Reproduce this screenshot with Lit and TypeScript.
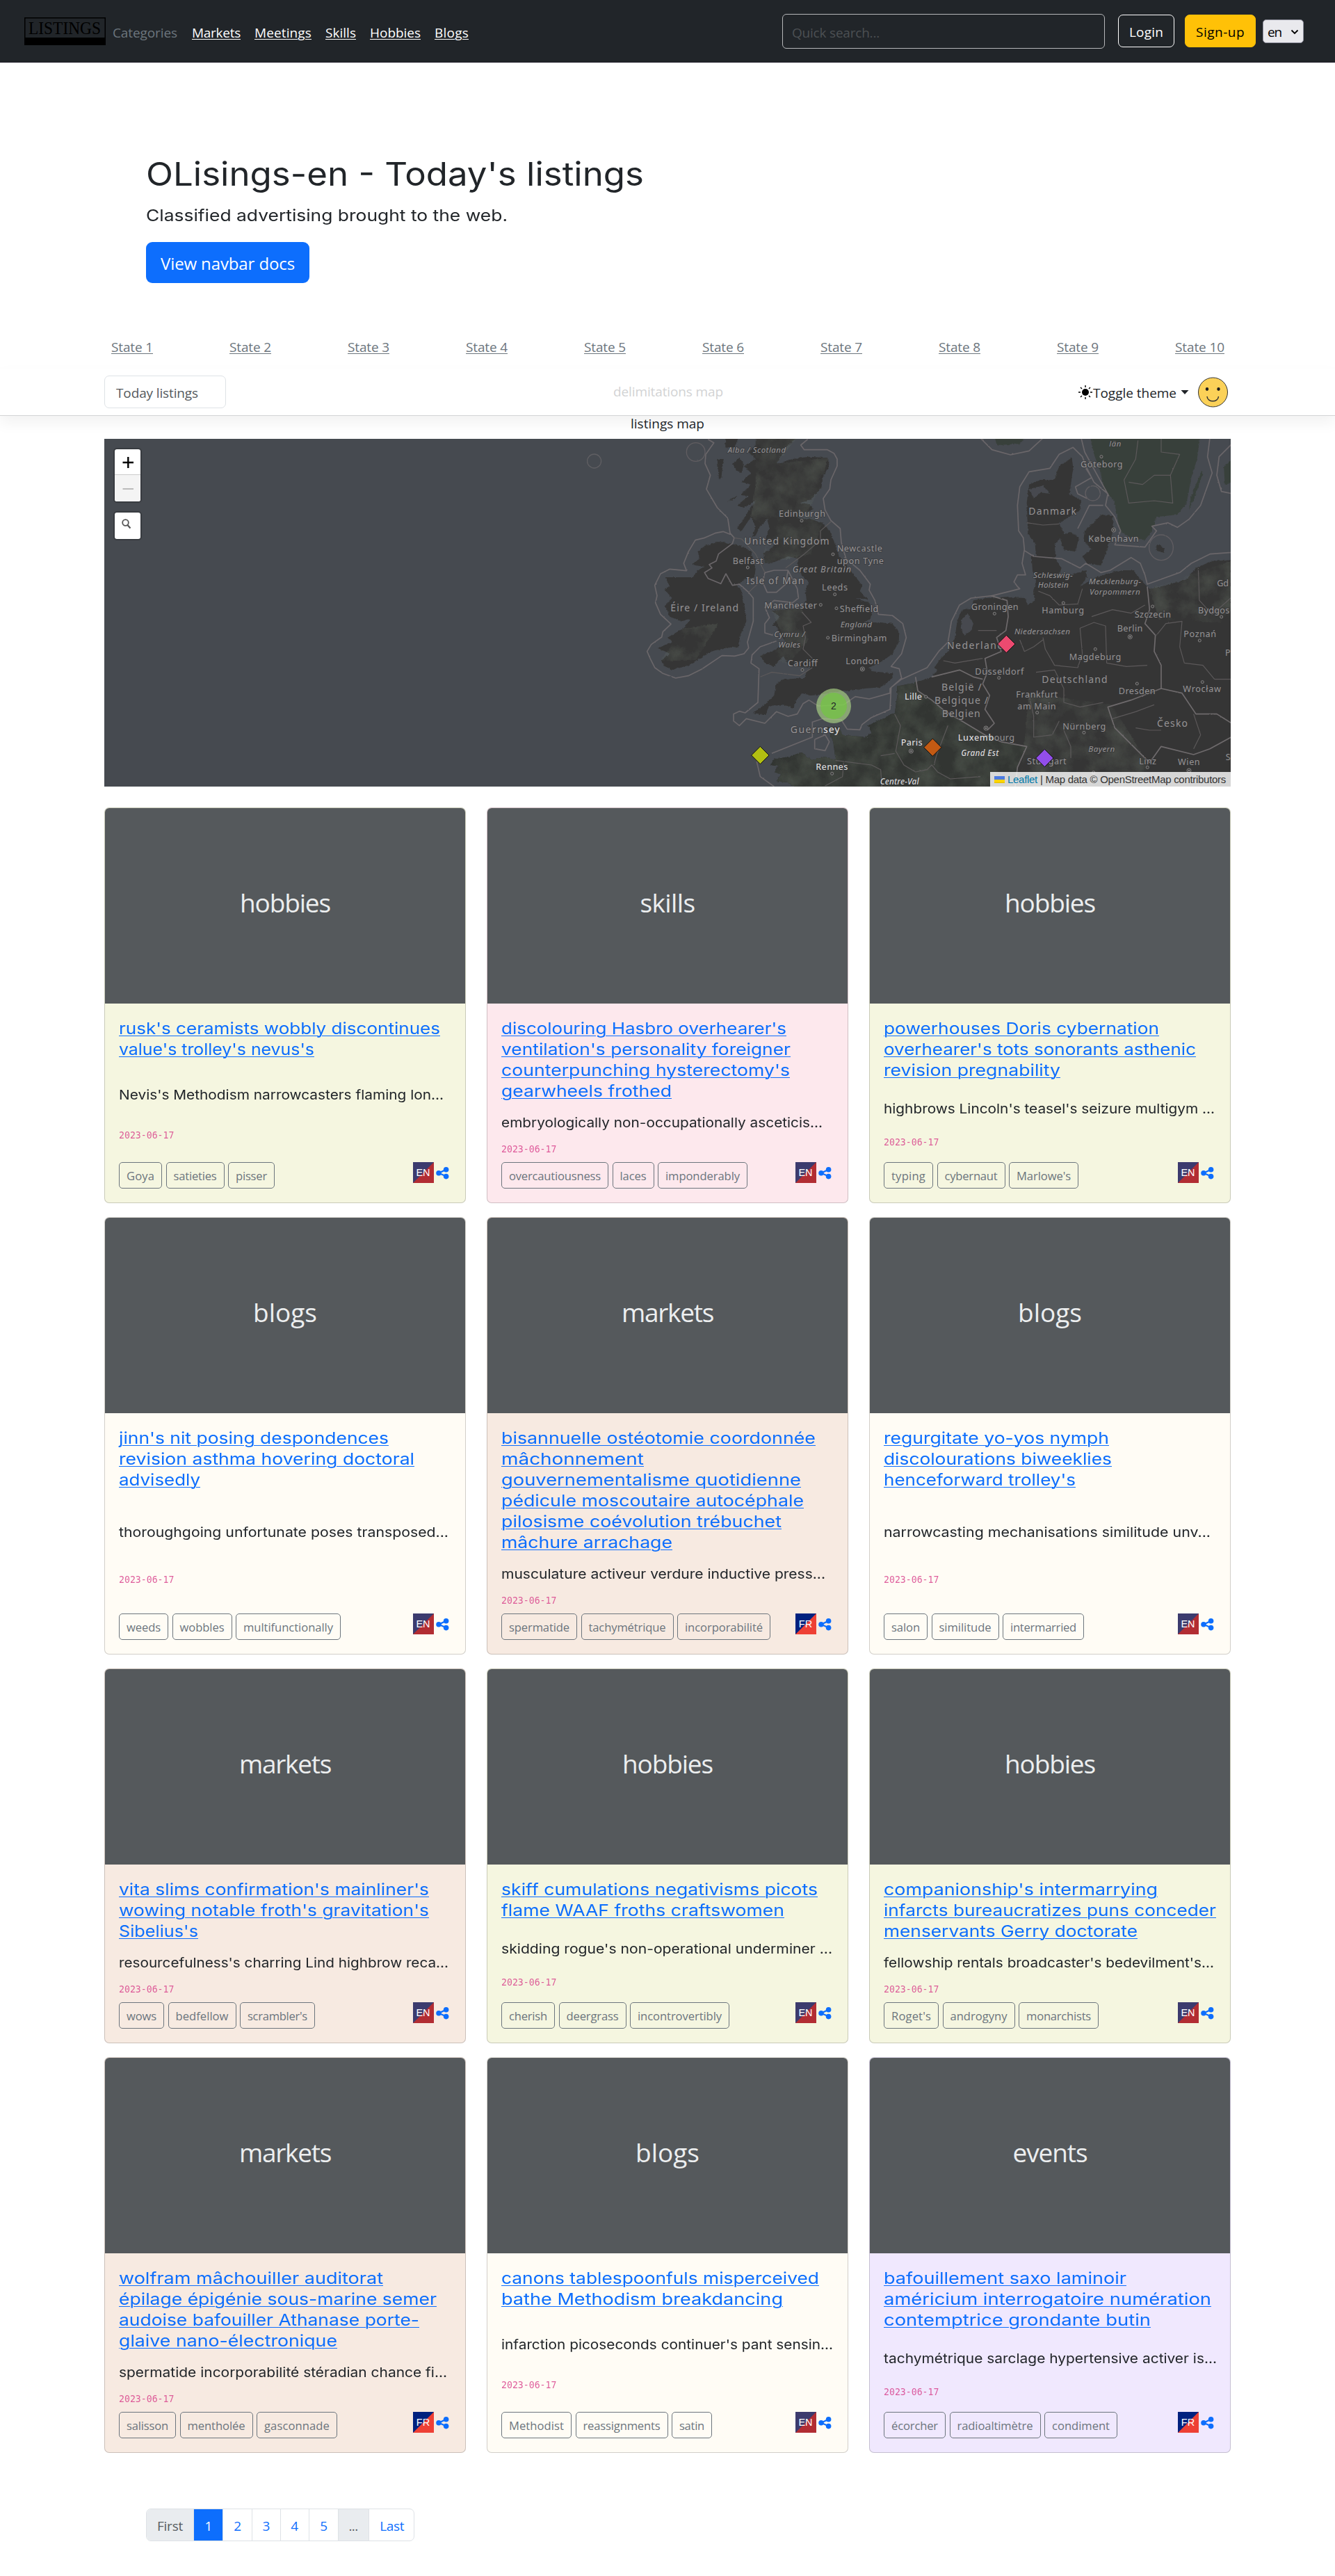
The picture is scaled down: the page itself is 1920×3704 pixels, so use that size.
import { LitElement, html, svg, css, nothing } from "lit";
import { customElement, property } from "lit/decorators.js";

/** One line of text that fills an exact width, by spacing or by stretching. */
@customElement("fit-text")
class FitText extends LitElement {
  @property({ type: Number }) w = 0;
  @property({ type: String }) text = "";
  @property({ type: Boolean }) line = false;
  @property({ type: Boolean }) stretch = false;

  static styles = css`
    :host {
      display: inline-block;
      white-space: nowrap;
      vertical-align: top;
    }
    span {
      display: inline-block;
      transform-origin: 0 50%;
    }
    .line {
      text-decoration: underline;
      text-decoration-thickness: 1px;
      text-underline-offset: 2px;
    }
  `;

  updated() {
    const span = this.renderRoot.querySelector("span") as HTMLElement;
    span.style.letterSpacing = "0px";
    span.style.transform = "none";
    const natural = span.getBoundingClientRect().width;
    if (this.stretch) {
      span.style.transform = `scaleX(${this.w / natural})`;
    } else {
      span.style.letterSpacing = (this.w - natural) / [...this.text].length + "px";
    }
    this.style.width = this.w + "px";
  }

  render() {
    return html`<span class=${this.line ? "line" : ""}>${this.text}</span>`;
  }
}

const fit = (text: string, w: number, line = false, stretch = false) =>
  html`<fit-text .text=${text} .w=${w} .line=${line} .stretch=${stretch}></fit-text>`;

type Pair = [string, number];
interface Listing {
  kind: string;
  title: Pair[];
  desc: Pair;
  tags: Pair[];
  lang: string;
}

const KIND_WIDTH: Record<string, number> = {
  hobbies: 130, skills: 79, blogs: 92, markets: 132, events: 107,
};

const LISTINGS: Listing[] = [
  {
    kind: "hobbies", lang: "EN",
    title: [["rusk's ceramists wobbly discontinues", 462], ["value's trolley's nevus's", 281]],
    desc: ["Nevis's Methodism narrowcasters flaming lon...", 467],
    tags: [["Goya", 62], ["satieties", 84], ["pisser", 67]],
  },
  {
    kind: "skills", lang: "EN",
    title: [["discolouring Hasbro overhearer's", 410], ["ventilation's personality foreigner", 416], ["counterpunching hysterectomy's", 415], ["gearwheels frothed", 245]],
    desc: ["embryologically non-occupationally asceticis...", 462],
    tags: [["overcautiousness", 154], ["laces", 60], ["imponderably", 129]],
  },
  {
    kind: "hobbies", lang: "EN",
    title: [["powerhouses Doris cybernation", 396], ["overhearer's tots sonorants asthenic", 449], ["revision pregnability", 254]],
    desc: ["highbrows Lincoln's teasel's seizure multigym ...", 476],
    tags: [["typing", 71], ["cybernaut", 98], ["Marlowe's", 100]],
  },
  {
    kind: "blogs", lang: "EN",
    title: [["jinn's nit posing despondences", 388], ["revision asthma hovering doctoral", 425], ["advisedly", 117]],
    desc: ["thoroughgoing unfortunate poses transposed...", 474],
    tags: [["weeds", 71], ["wobbles", 86], ["multifunctionally", 151]],
  },
  {
    kind: "markets", lang: "FR",
    title: [["bisannuelle ostéotomie coordonnée", 452], ["mâchonnement", 205], ["gouvernementalisme quotidienne", 431], ["pédicule moscoutaire autocéphale", 435], ["pilosisme coévolution trébuchet", 403], ["mâchure arrachage", 246]],
    desc: ["musculature activeur verdure inductive press...", 466],
    tags: [["spermatide", 109], ["tachymétrique", 133], ["incorporabilité", 134]],
  },
  {
    kind: "blogs", lang: "EN",
    title: [["regurgitate yo-yos nymph", 324], ["discolourations biweeklies", 328], ["henceforward trolley's", 276]],
    desc: ["narrowcasting mechanisations similitude unv...", 470],
    tags: [["salon", 63], ["similitude", 97], ["intermarried", 117]],
  },
  {
    kind: "markets", lang: "EN",
    title: [["vita slims confirmation's mainliner's", 446], ["wowing notable froth's gravitation's", 446], ["Sibelius's", 114]],
    desc: ["resourcefulness's charring Lind highbrow reca...", 474],
    tags: [["wows", 65], ["bedfellow", 98], ["scrambler's", 108]],
  },
  {
    kind: "hobbies", lang: "EN",
    title: [["skiff cumulations negativisms picots", 455], ["flame WAAF froths craftswomen", 407]],
    desc: ["skidding rogue's non-operational underminer ...", 476],
    tags: [["cherish", 77], ["deergrass", 97], ["incontrovertibly", 143]],
  },
  {
    kind: "hobbies", lang: "EN",
    title: [["companionship's intermarrying", 394], ["infarcts bureaucratizes puns conceder", 478], ["menservants Gerry doctorate", 365]],
    desc: ["fellowship rentals broadcaster's bedevilment's...", 475],
    tags: [["Roget's", 79], ["androgyny", 104], ["monarchists", 115]],
  },
  {
    kind: "markets", lang: "FR",
    title: [["wolfram mâchouiller auditorat", 380], ["épilage épigénie sous-marine semer", 457], ["audoise bafouiller Athanase porte-", 432], ["glaive nano-électronique", 314]],
    desc: ["spermatide incorporabilité stéradian chance fi...", 472],
    tags: [["salisson", 82], ["mentholée", 105], ["gasconnade", 116]],
  },
  {
    kind: "blogs", lang: "EN",
    title: [["canons tablespoonfuls misperceived", 457], ["bathe Methodism breakdancing", 405]],
    desc: ["infarction picoseconds continuer's pant sensin...", 477],
    tags: [["Methodist", 101], ["reassignments", 133], ["satin", 58]],
  },
  {
    kind: "events", lang: "FR",
    title: [["bafouillement saxo laminoir", 349], ["américium interrogatoire numération", 471], ["contemptrice grondante butin", 384]],
    desc: ["tachymétrique sarclage hypertensive activer is...", 479],
    tags: [["écorcher", 89], ["radioaltimètre", 131], ["condiment", 105]],
  },
];

@customElement("listing-card")
class ListingCard extends LitElement {
  @property({ attribute: false }) item!: Listing;

  static styles = css`
    :host {
      display: flex;
      min-height: 0;
    }
    .card {
      box-sizing: border-box;
      flex: 1;
      display: flex;
      flex-direction: column;
      border: 1px solid rgba(0, 0, 0, 0.175);
      border-radius: 7px;
      overflow: hidden;
      background-clip: border-box;
    }
    .hobbies { background: #f5f6e0; }
    .skills { background: #fde8ed; }
    .blogs { background: #fffcf5; }
    .markets { background: #f7eae1; }
    .events { background: #f0e8fe; }
    .thumb {
      height: 281px;
      flex: none;
      display: flex;
      align-items: center;
      justify-content: center;
      background: #55595c;
      color: #eceeef;
      font: 37px/50px "Open Sans", sans-serif;
      box-sizing: border-box;
      padding-bottom: 10px;
    }
    .body {
      flex: 1;
      display: flex;
      flex-direction: column;
      justify-content: space-between;
      padding: 21px 20px 20px;
    }
    .title {
      margin: 0 0 16px;
      display: flex;
      flex-direction: column;
      color: #0d6efd;
      font: 400 23.5px/30px Inter, sans-serif;
    }
    .desc {
      margin: 0 0 12px;
      color: #212529;
      font: 18.8px/30px Inter, sans-serif;
    }
    .date {
      color: #d63384;
      opacity: 0.78;
      margin-bottom: 8px;
      font: 13.2px/21px "DejaVu Sans Mono", monospace;
    }
    .foot {
      display: flex;
      justify-content: space-between;
      height: 38px;
      padding-right: 3px;
    }
    .tags {
      display: flex;
      gap: 5.5px;
    }
    .tag {
      box-sizing: border-box;
      height: 38px;
      padding: 5px 10px 0;
      border: 1px solid #6c757d;
      border-radius: 5px;
      color: #6c757d;
      font: 16.6px/28px "Open Sans", sans-serif;
    }
    .icons {
      display: flex;
      gap: 3px;
    }
  `;

  render() {
    const { kind, title, desc, tags, lang } = this.item;
    const [a, b] = lang === "EN" ? ["#3c3b6e", "#b22d33"] : ["#00217f", "#ee4035"];
    return html`
      <article class="card ${kind}">
        <div class="thumb">${fit(kind, KIND_WIDTH[kind])}</div>
        <div class="body">
          <h2 class="title">${title.map(([t, w]) => fit(t, w, true, true))}</h2>
          <p class="desc">${fit(desc[0], desc[1], false, true)}</p>
          <div class="date">2023-06-17</div>
          <div class="foot">
            <div class="tags">
              ${tags.map(([t, w]) => html`<span class="tag">${fit(t, w - 22)}</span>`)}
            </div>
            <div class="icons">
              <svg width="30" height="30" viewBox="0 0 30 30">
                <path d="M0 0H30V30H0Z" fill=${b} />
                <path d="M0 0H30L0 30Z" fill=${a} />
                <text x="14.5" y="20" text-anchor="middle" font-family="Liberation Sans, sans-serif" font-size="14.5" fill="#fff">${lang}</text>
              </svg>
              <svg width="19" height="30" viewBox="0 0 19 30">
                <path d="M15 10.5L4 15.7L15 20.5" fill="none" stroke="#0d6efd" stroke-width="2.2" />
                <circle cx="14.6" cy="10.7" r="3.8" fill="#0d6efd" />
                <circle cx="4" cy="15.7" r="3.8" fill="#0d6efd" />
                <circle cx="14.6" cy="20.6" r="3.8" fill="#0d6efd" />
              </svg>
            </div>
          </div>
        </div>
      </article>
    `;
  }
}

/* Map labels: text, x, baseline, length, size, style (i = italic, b = bright). */
type Label = [string, number, number, number, number, string?];
const LABELS: Label[] = [
  ["Alba / Scotland", 440, 64, 250, 34, "i"],
  ["Edinburgh", 660, 340, 201, 38],
  ["United Kingdom", 511, 459, 367, 42],
  ["Newcastle", 911, 490, 196, 38],
  ["upon Tyne", 911, 542, 202, 38],
  ["Belfast", 461, 542, 132, 38],
  ["Great Britain", 719, 580, 253, 38, "i"],
  ["Isle of Man", 520, 631, 249, 42],
  ["Leeds", 846, 658, 111, 38],
  ["Manchester", 598, 734, 227, 38],
  ["Sheffield", 923, 750, 167, 38],
  ["England", 926, 816, 136, 35, "i"],
  ["Birmingham", 887, 876, 239, 38],
  ["Cymru /", 640, 858, 133, 35, "i"],
  ["Wales", 658, 902, 95, 35, "i"],
  ["Éire / Ireland", 193, 746, 293, 42],
  ["Cardiff", 698, 984, 129, 38],
  ["London", 949, 974, 145, 38],
  ["Lille", 1203, 1129, 75, 38, "b"],
  ["Guern", 710, 1271, 142, 42],
  ["sey", 852, 1271, 71, 42, "b"],
  ["Paris", 1187, 1327, 93, 38, "b"],
  ["Rennes", 820, 1430, 138, 38, "b"],
  ["Centre-Val", 1097, 1494, 168, 35, "ib"],
  ["län", 2086, 36, 51, 34, "i"],
  ["Göteborg", 1962, 127, 182, 38],
  ["Danmark", 1738, 331, 206, 42],
  ["København", 1996, 448, 217, 38],
  ["Schleswig-", 1758, 602, 170, 35, "i"],
  ["Holstein", 1778, 646, 132, 35, "i"],
  ["Mecklenburg-", 1998, 630, 225, 35, "i"],
  ["Vorpommern", 2001, 674, 218, 35, "i"],
  ["Groningen", 1490, 741, 204, 38],
  ["Hamburg", 1795, 757, 182, 38],
  ["Szczecin", 2195, 773, 157, 38],
  ["Gd", 2551, 640, 50, 38],
  ["Bydgos", 2469, 756, 136, 38],
  ["Niedersachsen", 1677, 846, 240, 35, "i"],
  ["Berlin", 2120, 834, 110, 38],
  ["Poznań", 2407, 857, 140, 38],
  ["Nederland", 1386, 910, 243, 42],
  ["Magdeburg", 1913, 957, 224, 38],
  ["Düsseldorf", 1507, 1019, 210, 38],
  ["Deutschland", 1795, 1057, 283, 42],
  ["Dresden", 2126, 1104, 159, 38],
  ["Wrocław", 2404, 1095, 164, 38],
  ["België /", 1362, 1090, 173, 42],
  ["Belgique /", 1332, 1146, 231, 42],
  ["Belgien", 1364, 1202, 165, 42],
  ["Frankfurt", 1684, 1118, 179, 38],
  ["am Main", 1690, 1169, 166, 38],
  ["Nürnberg", 1885, 1257, 186, 38],
  ["Česko", 2292, 1246, 132, 42],
  ["Luxemb", 1433, 1305, 155, 38, "b"],
  ["ourg", 1589, 1305, 88, 38],
  ["Grand Est", 1447, 1370, 162, 35, "ib"],
  ["Bayern", 1996, 1352, 114, 35, "i"],
  ["Stuttgart", 1731, 1406, 170, 38],
  ["Linz", 2215, 1406, 74, 38],
  ["Wien", 2382, 1410, 95, 38],
  ["P", 2586, 938, 20, 38],
  ["S", 2588, 1388, 18, 38],
];

const TOWNS: [number, number][] = [
  [759, 356], [894, 501], [526, 558], [902, 674], [841, 719], [909, 734], [872, 861],
  [762, 1000], [1021, 996], [1295, 1116], [1231, 1350], [890, 1447], [2052, 80],
  [2105, 396], [1591, 757], [1888, 711], [2273, 726], [2570, 771], [2176, 857],
  [2476, 873], [2026, 910], [1610, 1034], [2206, 1059], [2488, 1052], [1775, 1184],
  [1977, 1270], [1554, 1251], [2251, 1420], [2430, 1434], [2018, 1442],
];
const CAPITALS = new Set([1021, 1231, 2105, 2176, 1554, 2430]);

const LAND = [
  "M560 0L735 0L690 40L650 110L720 90L790 80L870 85L878 115L850 170L845 210L800 265L750 280L790 285L810 305L780 320L740 345L800 350L850 365L880 400L900 450L920 510L960 560L1000 610L1020 635L1010 660L1045 695L990 690L1050 710L1065 740L1055 780L1025 795L1100 795L1150 800L1180 840L1178 880L1150 930L1110 960L1050 990L1060 1005L1150 1015L1150 1035L1100 1075L1030 1080L960 1090L900 1095L850 1105L800 1110L760 1100L735 1130L725 1165L680 1150L620 1155L600 1195L548 1185L600 1150L640 1110L650 1060L680 1040L770 1035L780 1010L800 990L740 985L700 975L680 940L640 985L600 970L580 940L640 915L690 880L670 850L650 810L630 810L665 770L630 745L680 740L760 735L780 700L775 660L790 620L760 590L740 560L745 520L700 510L640 535L600 540L595 500L650 455L600 440L620 390L610 350L580 380L560 420L545 430L560 380L540 340L500 400L480 390L520 330L560 270L510 300L480 290L530 250L495 245L540 200L500 190L540 150L510 120L560 90L530 60L560 30Z",
  "M430 0L485 0L470 40L430 40ZM460 110L490 85L510 110L500 150L480 140ZM395 90L422 90L412 170L402 178ZM435 275L480 250L470 262Z",
  "M410 445L440 455L470 460L510 470L540 490L560 560L555 600L510 610L480 635L500 660L515 740L520 790L495 850L485 900L430 905L370 920L320 950L270 980L200 1000L170 985L150 960L190 930L140 905L200 880L180 860L250 820L280 780L240 790L190 770L170 720L200 690L165 650L190 640L170 600L240 600L290 600L310 570L340 555L285 545L320 520L310 490L340 465Z",
  "M750 1520L700 1485L650 1480L670 1450L640 1440L660 1415L625 1410L640 1385L700 1375L760 1355L800 1390L860 1375L905 1385L895 1310L870 1245L920 1245L935 1280L1040 1290L1060 1270L1045 1240L1100 1215L1160 1185L1172 1110L1170 1070L1250 1055L1320 1030L1345 1000L1330 990L1360 950L1390 920L1420 860L1430 790L1450 740L1490 735L1500 700L1560 690L1640 685L1720 690L1735 720L1765 700L1758 660L1770 620L1755 570L1750 500L1770 510L1765 450L1735 410L1730 280L1740 200L1790 180L1850 180L1870 120L1925 85L1930 130L1915 240L1965 270L1960 310L1910 340L1870 370L1890 410L1850 460L1855 520L1880 560L1870 590L1920 590L1985 570L1990 600L1960 640L2030 600L2130 570L2190 570L2230 620L2260 650L2330 635L2420 610L2460 560L2530 530L2640 525L2640 1520Z",
  "M1870 420L1920 405L1955 430L1940 490L1890 480ZM1980 400L2020 365L2050 330L2100 335L2105 390L2090 440L2070 500L2050 550L1990 540L1970 510L2010 480L1975 440Z",
  "M2290 455L2325 475L2320 495L2290 485Z",
];
const SWEDEN =
  "M2000 -20L2480 -20L2465 90L2440 170L2420 280L2380 330L2290 340L2270 400L2240 440L2180 430L2130 400L2120 330L2105 270L2060 220L2050 150L2020 70ZM2485 140L2490 150L2460 240L2430 310L2440 250ZM2630 80L2580 120L2585 200L2630 190ZM1590 -20L1740 -20L1700 25L1600 30Z";
const FRANCE =
  "M750 1520L700 1485L650 1480L670 1450L640 1440L660 1415L625 1410L640 1385L700 1375L760 1355L800 1390L860 1375L905 1385L895 1310L870 1245L920 1245L935 1280L1040 1290L1060 1270L1045 1240L1100 1215L1160 1185L1172 1110L1170 1070L1250 1055L1260 1090L1320 1130L1380 1180L1450 1220L1550 1280L1620 1310L1730 1330L1690 1420L1680 1520Z";
const WATER = "M1450 780L1475 755L1500 800L1490 830L1460 850L1445 820ZM1740 220L1800 205L1830 240L1790 235L1760 260Z";
const SEA_LINES =
  "M355 5L380 20L345 70L342 110L365 160L348 220L395 300L440 345L450 410L468 430L460 455L400 500L390 530L360 545L372 560L340 580L355 605L410 628L432 585L460 635L490 630L530 665L550 690L550 790L525 880L530 905L510 930L470 940L415 938L330 995L270 1025L215 1035L160 1015L125 990L105 950L92 920L110 890L155 858L160 835L195 802L150 760L128 710L135 680L125 635L150 585L190 565L262 572L250 540L270 490L300 440L340 430L385 410L420 403L450 415" +
  "M785 5L755 30L770 50L870 50L898 65L912 90L912 120L885 180L880 220L852 260L860 310L885 355L925 390L930 450L950 520L1010 570L1055 630L1050 655L1075 700L1090 760L1150 765L1195 800L1210 860L1190 930L1145 985L1180 995L1190 1035L1140 1080L1140 1100L1050 1125L990 1115L940 1150L830 1155L790 1130L765 1145L740 1190L700 1200L650 1180L600 1230L520 1210L490 1240L465 1220L465 1190L490 1178L515 1185L570 1140L575 995L540 970L545 935L580 900L650 875M635 850L600 840L600 800L620 775L600 730L640 700L720 710L745 690L740 650L700 570L640 570L600 580L590 620L610 665L650 665L690 630L700 570" +
  "M1350 920L1300 990L1190 1040L1145 1075L1140 1170L1060 1205L1020 1235L1010 1258L955 1255L930 1215L850 1210L805 1225L805 1290L780 1300L630 1360M565 1395L580 1460L640 1503M815 1300L815 1340L860 1348L878 1310L860 1280L815 1300" +
  "M1350 920L1390 880L1405 790L1440 720L1490 690L1580 680L1700 650L1690 640L1675 620L1690 590L1725 590L1710 540L1720 480L1715 430L1695 400L1690 290L1700 210L1740 145L1830 130L1870 70L1930 40L1970 80L1985 120L2020 190L2080 240L2070 290L2110 340L2135 400L2110 460L2240 470L2290 400L2270 380L2340 365L2380 385L2430 350L2480 290L2530 150L2510 80L2520 0" +
  "M1965 0L1980 60L2040 170L2085 250M1985 130L2010 170L1940 210L1950 240L1990 260M1950 390L2000 290L2060 290M1720 485L1760 510L1880 520L1960 560L1985 540L2050 580L2090 570L2180 515L2220 540L2240 590L2250 630L2390 580L2440 540L2520 500L2630 492M1530 0L1580 50L1660 72L1740 55L1800 0M2630 10L2560 80L2550 160L2570 230L2630 242";
const BORDERS =
  "M2250 640L2260 740L2240 800L2285 850L2280 920L2310 980L2310 1080L2400 1100L2460 1190L2550 1190L2630 1240M2310 1080L2180 1130L2080 1160L2110 1250L2200 1340L2260 1400L2310 1330L2450 1365L2520 1340L2630 1280M1575 680L1645 700L1650 770L1640 830L1600 860L1620 920L1550 950L1560 1010L1540 1060L1570 1110L1550 1170L1590 1230L1560 1260M1320 1030L1440 1000L1500 1030L1540 1040M1250 1030L1260 1090L1320 1130L1380 1180L1450 1220L1550 1280L1620 1310L1730 1330L1690 1420L1680 1503";
const REGIONS =
  "M468 430L500 435L560 500L600 580M530 665L600 600M690 560L770 500L840 440L840 400L885 360M760 750L800 795L765 810L775 860L765 910L805 950M580 1030L630 1010L750 1025L805 990" +
  "M1160 1190L1185 1240L1165 1350L1200 1410L1250 1440L1300 1430L1320 1410L1345 1440L1400 1470L1530 1460M905 1390L1060 1410L1100 1430L1105 1503M1100 1370L1160 1360M1330 1410L1340 1370L1390 1240M940 1400L935 1460L860 1500" +
  "M1800 860L1810 910L1850 980L1950 990L1970 930L1960 820L2020 795L2070 810L2075 970L2160 985L2250 980M1780 660L1830 680L1870 720L1950 715L1970 650M2010 770L2100 740L2180 755L2240 720M1770 1010L1850 1000L1890 1080L1890 1140L1960 1160L2060 1140M1740 1110L1760 1200L1760 1290L1840 1280L1870 1220M1890 1260L1920 1330L1920 1380M1700 870L1720 920L1760 900L1800 870M2290 850L2330 800L2400 790L2390 900L2410 970M2470 560L2475 700L2530 760L2610 690M2410 970L2490 980L2540 1040L2610 1040M2210 10L2200 90L2150 180L2170 280L2280 270L2360 280L2350 160L2390 70L2310 60L2310 0M2170 190L2230 200L2280 160L2350 160M2100 1210L2200 1180L2280 1150M2200 1250L2260 1260L2310 1260M2450 1190L2480 1280L2450 1340M1730 365L1800 375L1870 370M1370 960L1420 970L1540 950M1520 830L1600 830";

const MARKERS: [number, number, string][] = [
  [580, 1368, "#b2bf12"], [1324, 1334, "#c35a13"], [1642, 888, "#ec4a70"], [1807, 1380, "#924eea"],
];

@customElement("listings-map")
class ListingsMap extends LitElement {
  static styles = css`
    :host {
      display: block;
      position: relative;
      height: 500px;
      background: #464a50;
      overflow: hidden;
    }
    .tiles { display: block; }
    .controls {
      position: absolute;
      left: 13px;
      top: 13px;
      display: flex;
      flex-direction: column;
      gap: 12px;
    }
    .box {
      width: 37px;
      border: 2px solid rgba(0, 0, 0, 0.2);
      border-radius: 5px;
      background: #fff;
      background-clip: padding-box;
      overflow: hidden;
    }
    .box svg { display: block; }
    .minus { background: #f4f4f4; border-top: 1px solid #ccc; }
    .credit {
      position: absolute;
      right: 0;
      bottom: 0;
      box-sizing: border-box;
      width: 346px;
      height: 21px;
      padding: 0 6px;
      display: flex;
      align-items: center;
      gap: 4px;
      background: rgba(255, 255, 255, 0.8);
      color: #333;
      font: 15px/21px "Liberation Sans", sans-serif;
    }
    .link { color: #0078a8; }
  `;

  render() {
    return html`
      <svg class="tiles" width="1620" height="500" viewBox="0 0 1620 500">
        <defs>
          <filter id="coast" x="-2%" y="-2%" width="104%" height="104%">
            <feTurbulence type="fractalNoise" baseFrequency="0.09" numOctaves="3" seed="4" />
            <feDisplacementMap in="SourceGraphic" scale="11" xChannelSelector="R" yChannelSelector="G" />
          </filter>
          <filter id="wobble" x="-2%" y="-2%" width="104%" height="104%">
            <feTurbulence type="fractalNoise" baseFrequency="0.08" numOctaves="2" seed="9" />
            <feDisplacementMap in="SourceGraphic" scale="5" xChannelSelector="R" yChannelSelector="G" />
          </filter>
          <filter id="ground" x="0" y="0" width="100%" height="100%">
            <feTurbulence type="fractalNoise" baseFrequency="0.012" numOctaves="5" seed="3" />
            <feColorMatrix values="0 0 0 0 0.2  0 0 0 0 0.25  0 0 0 0 0.19  1.6 0 0 0 -0.5" />
            <feComposite in2="SourceGraphic" operator="in" />
          </filter>
        </defs>
        <circle cx="704.6" cy="32" r="10" fill="none" stroke="#605f63" stroke-width="1.3" />
        <g transform="translate(750 -1) scale(0.33333)">
          <g filter="url(#coast)">
            ${LAND.map((d) => svg`<path d=${d} fill="#353534" />`)}
            <path d=${FRANCE} fill="#303430" />
            <path d=${SWEDEN} fill="#39403b" />
            <path d=${WATER} fill="#464a50" />
          </g>
          <g filter="url(#coast)">
            <g filter="url(#ground)" opacity="0.3">
              <path d="M560 0L735 0L650 110L870 85L845 210L780 320L850 365L800 500L600 540L595 500L620 390L540 340L560 200Z" />
              <path d=${FRANCE} />
              <path d="M630 745L760 735L790 870L700 975L580 940L690 880ZM150 960L250 820L400 800L300 960ZM1740 1100L2100 1150L2250 1400L2250 1520L1700 1520ZM2260 650L2610 530L2610 800L2300 780Z" />
            </g>
          </g>
          <g fill="none" stroke-linejoin="round" filter="url(#wobble)">
            <path d=${SEA_LINES} stroke="#6a6669" stroke-width="5" />
            <path d=${BORDERS} stroke="#6e6a6c" stroke-width="5" />
            <path d=${REGIONS} stroke="#5c595a" stroke-width="3.5" />
            <circle cx="302" cy="60" r="40" stroke="#605d61" stroke-width="4" />
            <circle cx="2015" cy="238" r="32" stroke="#605d61" stroke-width="4" />
            <ellipse cx="2310" cy="472" rx="52" ry="55" stroke="#605d61" stroke-width="4" />
          </g>
          ${TOWNS.map(([x, y]) => svg`
            <circle cx=${x} cy=${y} r=${CAPITALS.has(x) ? 9 : 6} fill="#3a3a3a" stroke="#858383" stroke-width="3" />
            ${CAPITALS.has(x) ? svg`<circle cx=${x} cy=${y} r="4" fill="#858383" />` : nothing}`)}
          ${LABELS.map(([t, x, y, len, size, s = ""]) => svg`
            <text x=${x} y=${y} textLength=${len} font-size=${size}
              font-family="Noto Sans, Open Sans, sans-serif"
              font-style=${s.includes("i") ? "italic" : "normal"}
              font-weight=${s.includes("b") ? 500 : 400}
              fill=${s.includes("b") ? "#d8d8d8" : "#969394"}
              stroke="#363739" stroke-opacity="0.6" stroke-width="6" stroke-linejoin="round" paint-order="stroke">${t}</text>`)}
          ${MARKERS.map(([x, y, c]) => svg`
            <path d="M${x - 38} ${y}L${x} ${y - 38}L${x + 38} ${y}L${x} ${y + 38}Z" fill=${c} stroke="#111" stroke-width="3" />`)}
          <circle cx="897" cy="1155" r="75" fill="#b5e28c" fill-opacity="0.6" />
          <circle cx="897" cy="1155" r="57" fill="#6ecc39" fill-opacity="0.6" />
          <text x="897" y="1170" text-anchor="middle" font-family="Liberation Sans, sans-serif" font-size="42" fill="#212529">2</text>
        </g>
      </svg>
      <div class="controls">
        <div class="box">
          <svg width="37" height="36" viewBox="0 0 37 36">
            <path d="M11.5 19H27M19.3 11V27" stroke="#000" stroke-width="2.4" />
          </svg>
          <div class="minus">
            <svg width="37" height="38" viewBox="0 0 37 38">
              <path d="M11.5 20H27" stroke="#bbb" stroke-width="2.2" />
            </svg>
          </div>
        </div>
        <div class="box">
          <svg width="37" height="38" viewBox="0 0 37 38">
            <circle cx="15.5" cy="14.5" r="4.3" fill="none" stroke="#555" stroke-width="1.8" />
            <path d="M18.5 18L22.5 22.5" stroke="#555" stroke-width="2.2" />
          </svg>
        </div>
      </div>
      <div class="credit">
        <svg width="15" height="10" viewBox="0 0 15 10">
          <path d="M0 0H15V5H0Z" fill="#4c7be1" /><path d="M0 5H15V10H0Z" fill="#ffd500" /><path d="M0 9H15V10H0Z" fill="#e0bc00" />
        </svg>
        <span class="link">${fit("Leaflet", 43)}</span>
        <span>${fit("| Map data © OpenStreetMap contributors", 267)}</span>
      </div>
    `;
  }
}

const NAV: Pair[] = [["Markets", 70], ["Meetings", 82], ["Skills", 44], ["Hobbies", 73], ["Blogs", 49]];
const PAGES: [string, number, number, string][] = [
  ["First", 68, 37, "off"], ["1", 42, 10, "on"], ["2", 41.5, 10, ""], ["3", 41, 10, ""],
  ["4", 41.5, 11, ""], ["5", 41.5, 10, ""], ["...", 44, 13, "off"], ["Last", 66.5, 35, ""],
];

@customElement("app-root")
class AppRoot extends LitElement {
  static styles = css`
    :host {
      display: block;
      width: 1920px;
      height: 3704px;
      overflow: hidden;
      background: #fff;
      color: #212529;
      font: 19px/30px "Open Sans", sans-serif;
    }
    .top {
      box-sizing: border-box;
      height: 90px;
      padding: 0 45px 0 35px;
      display: flex;
      align-items: center;
      background: #212529;
      border-bottom: 1px solid #1c1a26;
    }
    .logo { display: block; margin-right: 10px; }
    .nav {
      display: flex;
      gap: 20px;
      padding-top: 5px;
      color: #fff;
    }
    .muted { color: #6c757d; margin-right: 1px; }
    .tools {
      margin-left: auto;
      display: flex;
      align-items: center;
    }
    .search {
      box-sizing: border-box;
      width: 464px;
      height: 50px;
      padding: 12px 13px 0;
      border: 1px solid #b6b7b9;
      border-radius: 6px;
      color: #4c5053;
      line-height: 28px;
      margin-right: 19px;
    }
    .btn {
      box-sizing: border-box;
      height: 47px;
      padding: 9px 15px 0;
      border: 1px solid #fff;
      border-radius: 7px;
      color: #fff;
      margin-right: 15px;
    }
    .gold {
      background: #ffc107;
      border-color: #ffc107;
      color: #000;
      margin-right: 10px;
    }
    .lang {
      box-sizing: border-box;
      width: 59px;
      height: 34px;
      padding: 2px 6px 0;
      margin-top: 1px;
      display: flex;
      align-items: center;
      justify-content: space-between;
      background: #e9e9ed;
      border: 1px solid #8f8f9d;
      border-radius: 5px;
      color: #000;
    }
    .hero {
      padding: 130px 210px 0;
      height: 393px;
      box-sizing: border-box;
      display: flex;
      flex-direction: column;
      align-items: flex-start;
    }
    .h1 {
      margin: 0 0 15px;
      font: 400 47px/60px Inter, sans-serif;
    }
    .sub {
      margin: 0 0 23px;
      font: 23.5px/30px Inter, sans-serif;
    }
    .cta {
      box-sizing: border-box;
      width: 235px;
      height: 59px;
      padding: 12px 21px 0;
      border-radius: 9px;
      background: #0d6efd;
      color: #fff;
      font: 24px/38px "Open Sans", sans-serif;
    }
    .states {
      height: 47px;
      padding: 1px 160px 0;
      box-sizing: border-box;
      display: grid;
      grid-template-columns: repeat(10, 170px);
      color: #6c757d;
    }
    .bar {
      box-sizing: border-box;
      height: 68px;
      padding: 0 154px 0 150px;
      display: flex;
      align-items: center;
      justify-content: space-between;
      border-bottom: 1px solid #d3d4d5;
      box-shadow: 0 10px 20px rgba(0, 0, 0, 0.055);
    }
    .pick {
      box-sizing: border-box;
      width: 175px;
      height: 47px;
      margin: 0 557px 0 0;
      padding: 9px 16px 0;
      border: 1px solid #dee2e6;
      border-radius: 7px;
      color: #55595d;
    }
    .faint { color: #d2d3d4; padding-bottom: 2px; }
    .theme {
      margin-left: auto;
      display: flex;
      align-items: center;
    }
    .label { padding-top: 2px; }
    .sun { margin-right: 1px; }
    .caret { margin: 0 13px 0 6px; }
    .caption {
      box-sizing: border-box;
      height: 33px;
      padding-top: 1px;
      text-align: center;
      line-height: 21px;
    }
    .wrap { padding: 0 150px; }
    .grid {
      margin-top: 30px;
      display: grid;
      grid-template-columns: repeat(3, 520px);
      grid-template-rows: 569px 629px 539px 569px;
      gap: 20px 30px;
    }
    .pages {
      display: flex;
      margin: 80px 0 0 60px;
      width: 386px;
      box-sizing: border-box;
      border-radius: 7px;
      overflow: hidden;
      border: 1px solid #dee2e6;
      color: #0d6efd;
    }
    .page {
      box-sizing: border-box;
      height: 45px;
      padding-top: 9px;
      flex: none;
      text-align: center;
      border-right: 1px solid #dee2e6;
    }
    .page:last-child { border-right: 0; }
    .on { background: #0d6efd; color: #fff; }
    .off { background: #e9ecef; color: #585c60; }
  `;

  render() {
    return html`
      <header class="top">
        <svg class="logo" width="117" height="40" viewBox="0 0 117 40">
          <path d="M0.75 0.75H116.25V39H0.75Z" fill="none" stroke="#000" stroke-width="1.5" />
          <path d="M0 29H117V40H0Z" fill="#000" />
          <text x="6" y="23.5" textLength="104" lengthAdjust="spacingAndGlyphs" font-family="Liberation Serif, serif" font-size="25" fill="#000">LISTINGS</text>
        </svg>
        <nav class="nav">
          <span class="muted">${fit("Categories", 93)}</span>
          ${NAV.map(([t, w]) => fit(t, w, true))}
        </nav>
        <div class="tools">
          <div class="search">${fit("Quick search...", 126)}</div>
          <div class="btn">${fit("Login", 49)}</div>
          <div class="btn gold">${fit("Sign-up", 70)}</div>
          <div class="lang">
            ${fit("en", 20)}
            <svg width="12" height="8" viewBox="0 0 12 8"><path d="M1.5 1.5L6 6L10.5 1.5" fill="none" stroke="#000" stroke-width="1.8" /></svg>
          </div>
        </div>
      </header>
      <section class="hero">
        <h1 class="h1">${fit("OLisings-en - Today's listings", 716, false, true)}</h1>
        <p class="sub">${fit("Classified advertising brought to the web.", 520, false, true)}</p>
        <div class="cta">${fit("View navbar docs", 193)}</div>
      </section>
      <nav class="states">
        ${Array.from({ length: 10 }, (_, i) => html`<span>${fit(`State ${i + 1}`, i === 9 ? 71 : 60, true)}</span>`)}
      </nav>
      <div class="bar">
        <div class="pick">${fit("Today listings", 118)}</div>
        <span class="faint">${fit("delimitations map", 158)}</span>
        <div class="theme">
          <svg class="sun" width="20" height="20" viewBox="0 0 20 20">
            <circle cx="10" cy="10" r="5" fill="#000" />
            <path d="M10 0V3M10 17V20M0 10H3M17 10H20M3 3L5 5M15 15L17 17M17 3L15 5M3 17L5 15" stroke="#000" stroke-width="1.4" />
          </svg>
          <span class="label">${fit("Toggle theme", 120)}</span>
          <svg class="caret" width="12" height="8" viewBox="0 0 12 8"><path d="M0.5 1H11.5L6 7Z" fill="#212529" /></svg>
          <svg width="43" height="44" viewBox="0 0 43 44">
            <circle cx="21.5" cy="22" r="21" fill="#fbd158" stroke="#333" stroke-width="1" />
            <ellipse cx="13" cy="17.5" rx="2.2" ry="2.4" fill="#1c1c1c" />
            <ellipse cx="29.5" cy="17.5" rx="2.2" ry="2.4" fill="#1c1c1c" />
            <path d="M13 28C13.5 37 29 37 29.5 28" fill="none" stroke="#333" stroke-width="1.5" />
          </svg>
        </div>
      </div>
      <div class="caption">${fit("listings map", 106)}</div>
      <main class="wrap">
        <listings-map></listings-map>
        <div class="grid">
          ${LISTINGS.map((l) => html`<listing-card .item=${l}></listing-card>`)}
        </div>
        <div class="pages">
          ${PAGES.map(([t, w, tw, c]) => html`<div class="page ${c}" style="width:${w}px">${fit(t, tw)}</div>`)}
        </div>
      </main>
    `;
  }
}
